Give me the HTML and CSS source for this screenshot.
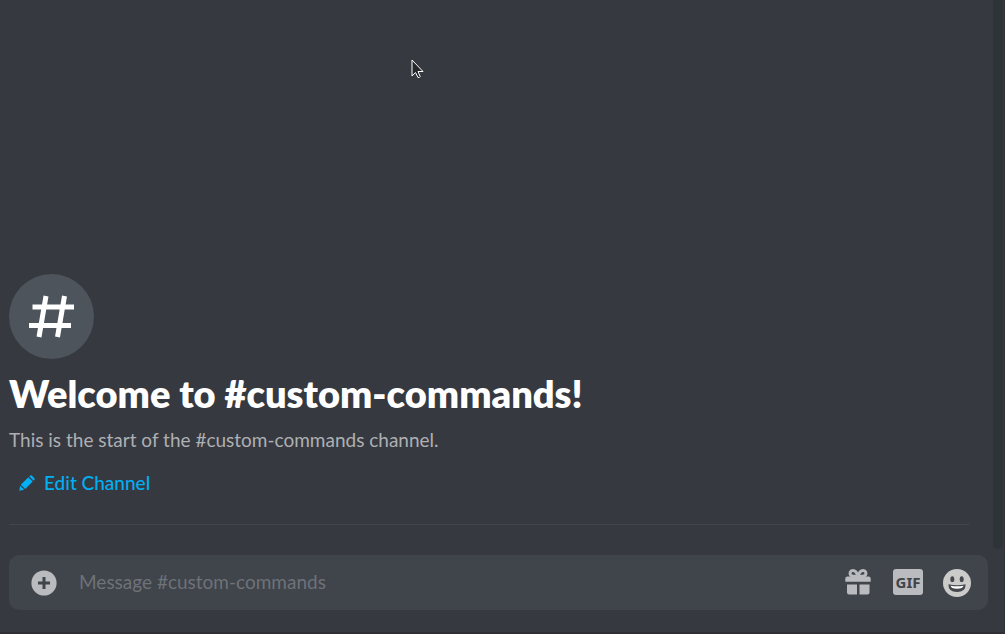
FILE: index.html
```html
<!DOCTYPE html>
<html lang="en">
<head>
<meta charset="utf-8">
<meta name="viewport" content="width=device-width, initial-scale=1">
<title>#custom-commands</title>
<link rel="stylesheet" href="styles.css">
</head>
<body>
<main class="chat">
  <section class="column">
    <div class="messages">
      <div class="channel-icon">
        <svg width="46" height="44" viewBox="0 0 46 44" aria-hidden="true">
          <path d="M17 1L10 42M35.500 1L28.500 42M3.500 12H45M0 30.500H42" class="hash"/>
        </svg>
      </div>
      <h1 class="title">Welcome to #custom-commands!</h1>
      <p class="subtitle">This is the start of the #custom-commands channel.</p>
      <button class="edit" type="button">
        <svg width="16" height="16" viewBox="0 0 16 16" aria-hidden="true">
          <path fill="currentColor" d="M10.2 1.3L11.2.4Q12 0 12.8.6L15.4 3.2Q16 4 15.5 4.8L14.6 5.7ZM9.3 2.2L13.7 6.6L6.2 14.1L1.8 9.7ZM1.1 10.7L5.2 14.8L.3 15.8Z"/>
        </svg>
        Edit Channel
      </button>
      <hr class="divider">
    </div>
    <form class="composer">
      <button class="icon-button attach" type="button" aria-label="Attach">
        <svg width="26" height="26" viewBox="0 0 26 26" aria-hidden="true">
          <circle cx="13" cy="13" r="12.6" fill="currentColor"/>
          <path d="M13 7V19M7 13H19" class="plus"/>
        </svg>
      </button>
      <input class="message-input" type="text" placeholder="Message #custom-commands" aria-label="Message #custom-commands">
      <div class="tools">
        <button class="icon-button" type="button" aria-label="Send a gift">
          <svg width="26" height="26" viewBox="0 0 26 26" aria-hidden="true">
            <path fill="currentColor" d="M2 15.5H12V25.5H4Q2 25.5 2 23.500ZM14.500 15.500H24.500V23.500Q24.500 25.500 22.500 25.500H14.500ZM2.500 7.500H23.500Q25.700 7.500 25.700 9.500V12.700H.3V9.500Q.3 7.500 2.500 7.500Z"/>
            <path class="bow" d="M12.800 7.500C12 3.500 10 1.500 7.800 1.500C5 1.500 4.500 4.500 5.600 6C6.700 7.400 9.500 7.500 12.800 7.500ZM13.200 7.500C14 3.500 16 1.500 18.200 1.500C21 1.500 21.500 4.500 20.400 6C19.300 7.400 16.500 7.500 13.200 7.500Z"/>
          </svg>
        </button>
        <button class="icon-button gif" type="button" aria-label="Open GIF picker"><span class="gif-badge">GIF</span></button>
        <button class="icon-button" type="button" aria-label="Select emoji">
          <svg width="28" height="28" viewBox="0 0 28 28" aria-hidden="true">
            <circle cx="14" cy="14" r="14" fill="#cbcbc9"/>
            <g fill="#44474c">
              <ellipse cx="9.300" cy="10.200" rx="2" ry="2.900"/>
              <ellipse cx="18.700" cy="10.200" rx="2" ry="2.900"/>
              <path d="M5.400 15.200Q14 17.300 22.600 15.200Q22.700 23 14 23Q5.300 23 5.400 15.200Z"/>
            </g>
            <path fill="#fff" d="M7.500 16.700Q14 18 20.500 16.700Q20 19.500 14 19.700Q8 19.500 7.500 16.700Z"/>
          </svg>
        </button>
      </div>
    </form>
  </section>
  <div class="scroll-track"><div class="scroll-thumb"></div></div>
</main>
<svg class="cursor" width="14" height="20" viewBox="0 0 14 20" aria-hidden="true">
  <path d="M1 1V17L4.500 13.500L7 18.500Q8.500 19 9.200 17.500L7 12.500H12Z"/>
</svg>
</body>
</html>
```

FILE: styles.css
```css
* {
  box-sizing: border-box;
}

body {
  margin: 0;
  background: #36393f;
  color: #fff;
  font-family: Lato, "Open Sans", sans-serif;
  font-size: 19px;
}

.chat {
  display: flex;
  min-height: 100vh;
  border-bottom: 2px solid #2e3035;
  border-right: 1px solid #303338;
}

.column {
  flex: 1;
  display: flex;
  flex-direction: column;
  padding: 0 5px 22px 9px;
}

.messages {
  flex: 1;
  display: flex;
  flex-direction: column;
  justify-content: flex-end;
  align-items: flex-start;
  padding-right: 19px;
}

.channel-icon {
  display: grid;
  place-items: center;
  width: 85px;
  height: 85px;
  border-radius: 50%;
  background: #4d545b;
}

.hash {
  fill: none;
  stroke: #fff;
  stroke-width: 5;
}

.title {
  margin: 9px 0 10px;
  font-size: 38px;
  line-height: 50px;
  font-weight: 800;
}

.subtitle {
  margin: 0;
  line-height: 24px;
  color: #aeb0b3;
}

.edit {
  display: flex;
  align-items: center;
  gap: 9px;
  margin: 11px 0 21px;
  padding: 0 10px;
  border: 0;
  background: none;
  color: #00aff4;
  font: inherit;
  font-weight: 500;
  line-height: 40px;
}

.divider {
  width: 100%;
  height: 1px;
  margin: 0 0 30px;
  border: 0;
  background: #42454b;
}

.composer {
  display: flex;
  align-items: center;
  height: 55px;
  padding: 0 17px 0 22px;
  border-radius: 10px;
  background: #40444b;
}

.icon-button {
  display: grid;
  place-items: center;
  margin: 0;
  padding: 0;
  border: 0;
  background: none;
  color: #b9bbbe;
}

.plus {
  stroke: #40444b;
  stroke-width: 3;
}

.message-input {
  flex: 1;
  min-width: 0;
  height: 30px;
  margin: 0 20px 3px 22px;
  padding: 0;
  border: 0;
  outline: 0;
  background: none;
  color: #dcddde;
  font: inherit;
}

.message-input::placeholder {
  color: #6e7279;
  opacity: 1;
}

.tools {
  display: flex;
  align-items: flex-start;
}

.bow {
  fill: none;
  stroke: currentColor;
  stroke-width: 3;
}

.gif {
  margin: 0 20px 0 22px;
}

.gif-badge {
  width: 30px;
  border-radius: 3px;
  background: #b9bbbe;
  color: #40444b;
  font: 700 15px/26px "Noto Sans", sans-serif;
  text-align: center;
}

.scroll-track {
  width: 11px;
  padding: 0 1px 83px 0;
}

.scroll-thumb {
  height: 100%;
  border-radius: 0 0 5px 5px;
  background: #2e3338;
}

.cursor {
  position: absolute;
  left: 411px;
  top: 59px;
  fill: #25272b;
  stroke: #fff;
  stroke-width: 1;
}
```
